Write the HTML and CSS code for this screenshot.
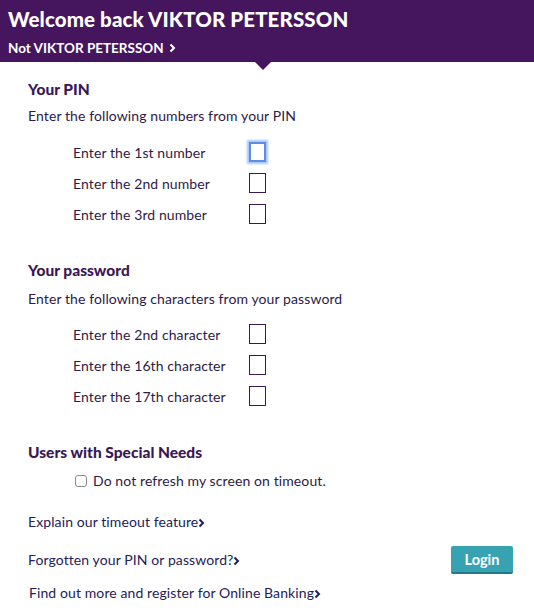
FILE: index.html
```html
<!DOCTYPE html>
<html>
<head>
<meta charset="utf-8">
<link rel="stylesheet" href="styles.css">
</head>
<body>
<header class="hdr">
  <h1 class="hdr-title">Welcome back VIKTOR PETERSSON</h1>
  <a class="hdr-sub">Not VIKTOR PETERSSON <svg class="chev" width="7" height="10" viewBox="0 0 7 10"><path d="M1.5 1.5 L5 5 L1.5 8.5" fill="none" stroke="#fff" stroke-width="2"/></svg></a>
  <span class="notch"></span>
</header>
<main class="main">
  <section class="sec">
    <h2 class="sec-title">Your PIN</h2>
    <p class="sec-intro">Enter the following numbers from your PIN</p>
    <div class="rows">
      <div class="row"><span class="lbl">Enter the 1st number</span><span class="box focus"></span></div>
      <div class="row"><span class="lbl">Enter the 2nd number</span><span class="box"></span></div>
      <div class="row"><span class="lbl">Enter the 3rd number</span><span class="box"></span></div>
    </div>
  </section>
  <section class="sec sec2">
    <h2 class="sec-title">Your password</h2>
    <p class="sec-intro">Enter the following characters from your password</p>
    <div class="rows">
      <div class="row"><span class="lbl">Enter the 2nd character</span><span class="box"></span></div>
      <div class="row"><span class="lbl">Enter the 16th character</span><span class="box"></span></div>
      <div class="row"><span class="lbl">Enter the 17th character</span><span class="box"></span></div>
    </div>
  </section>
  <section class="sec sec3">
    <h2 class="sec-title">Users with Special Needs</h2>
    <label class="chk"><span class="cb"></span>Do not refresh my screen on timeout.</label>
  </section>
  <div class="links">
    <a class="lnk">Explain our timeout feature<svg class="arr" width="7" height="10" viewBox="0 0 7 10"><path d="M1.5 1.5 L5 5 L1.5 8.5" fill="none" stroke="#1f2158" stroke-width="2"/></svg></a>
    <div class="lrow">
      <a class="lnk">Forgotten your PIN or password?<svg class="arr" width="7" height="10" viewBox="0 0 7 10"><path d="M1.5 1.5 L5 5 L1.5 8.5" fill="none" stroke="#1f2158" stroke-width="2"/></svg></a>
      <button class="btn">Login</button>
    </div>
    <a class="lnk l3">Find out more and register for Online Banking<svg class="arr" width="7" height="10" viewBox="0 0 7 10"><path d="M1.5 1.5 L5 5 L1.5 8.5" fill="none" stroke="#1f2158" stroke-width="2"/></svg></a>
  </div>
</main>
</body>
</html>
```
FILE: styles.css
```css
* { box-sizing: border-box; }
html, body { margin: 0; padding: 0; background: #fff; }
body { font-family: "Lato", "Noto Sans", sans-serif; color: #2e1a47; width: 534px; }
.hdr { position: relative; background: #45155e; height: 62px; padding: 7px 0 0 8px; }
.hdr-title { margin: 0; font-size: 20.5px; font-weight: 900; color: #fff; line-height: 24px; letter-spacing: 0.1px; }
.hdr-sub { display: flex; align-items: center; gap: 5px; margin-top: 9px; font-size: 13.5px; font-weight: 700; color: #fff; line-height: 16px; }
.notch { position: absolute; left: 255px; bottom: -8px; width: 0; height: 0; border-left: 8px solid transparent; border-right: 8px solid transparent; border-top: 8px solid #45155e; }
.main { padding: 17px 0 0 28px; }
.sec-title { margin: 0; font-size: 15.5px; font-weight: 900; line-height: 20px; color: #3a1856; }
.sec-intro { margin: 9px 0 0; font-size: 14px; line-height: 16px; letter-spacing: 0.1px; }
.rows { display: flex; flex-direction: column; gap: 11px; margin-top: 18px; padding-left: 45px; }
.row { display: flex; align-items: center; height: 20px; font-size: 14px; letter-spacing: 0.1px; }
.lbl { width: 176px; }
.box { width: 17px; height: 20px; border: 1px solid #3a1856; }
.box.focus { border: 2px solid #5b8fe6; box-shadow: 0 0 2px 2px #a9c6f4; }
.sec2 { margin-top: 36px; }
.sec2 .sec-intro { margin-top: 11px; }
.sec2 .rows { margin-top: 17px; }
.sec3 { margin-top: 36px; }
.chk { display: flex; align-items: center; margin-top: 11px; padding-left: 47px; font-size: 14px; letter-spacing: 0.1px; line-height: 16px; }
.cb { width: 12px; height: 12px; border: 1px solid #8a8a8a; border-radius: 3px; margin-right: 6px; }
.links { margin-top: 25px; display: flex; flex-direction: column; }
.lnk { display: flex; align-items: center; font-size: 14px; color: #1f2158; line-height: 16px; letter-spacing: 0.1px; }
.arr { margin-left: 0; margin-top: 2px; }
.lrow { display: flex; justify-content: space-between; align-items: center; margin-top: 16px; padding-right: 21px; }
.btn { width: 62px; height: 28px; background: #36a2b2; border: 0; border-bottom: 2px solid #1f7a8a; border-radius: 2px; color: #fff; font-family: inherit; font-weight: 700; font-size: 14.5px; padding: 0; }
.l3 { margin-top: 11px; margin-left: 1px; }
```
